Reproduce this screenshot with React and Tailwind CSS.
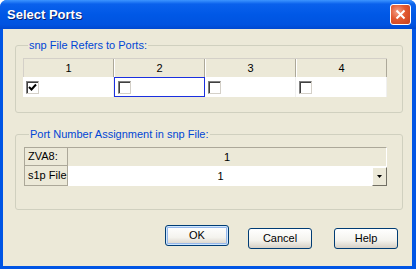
import React from "react";

const font = { fontFamily: '"Liberation Sans", Arial, sans-serif' };

function Checkbox({ checked }) {
  return (
    <div className="w-[13px] h-[13px] bg-white border border-t-[#808080] border-l-[#808080] border-r-[#d4d0c8] border-b-[#d4d0c8] shadow-[inset_1px_1px_0_#404040] flex items-center justify-center">
      {checked && (
        <svg width="9" height="9" viewBox="0 0 9 9">
          <path d="M1 4 L3.5 6.5 L8 1.5" stroke="#000" strokeWidth="2" fill="none" />
        </svg>
      )}
    </div>
  );
}

function XpButton({ children, focused }) {
  return (
    <button
      className={
        "w-[64px] h-[21px] rounded-[3px] border border-[#003c74] text-[11px] text-black bg-[linear-gradient(180deg,#ffffff_0%,#f4f3ee_60%,#d6d0c5_100%)] " +
        (focused ? "shadow-[inset_0_0_0_1px_#cee7ff,inset_0_0_0_2px_#98b8ea]" : "")
      }
    >
      {children}
    </button>
  );
}

function GroupBox({ title, children, className }) {
  return (
    <fieldset className={"border border-[#d0d0bf] rounded-[3px] " + className}>
      <legend className="ml-[5px] px-[1px] text-[11px] leading-[13px] text-[#0046d5]">{title}</legend>
      {children}
    </fieldset>
  );
}

export default function App() {
  const ports = [1, 2, 3, 4];
  return (
    <div
      className="w-[416px] h-[269px] flex flex-col rounded-t-[7px] bg-[#0055e5] overflow-hidden"
      style={font}
    >
      {/* Title bar */}
      <div className="h-[29px] flex items-center justify-between pl-[7px] pr-[5px] bg-[linear-gradient(180deg,#3d95ff_0%,#0a61ec_14%,#0058e6_50%,#0053e0_85%,#0048d0_100%)]">
        <span className="text-white font-bold text-[13px] [text-shadow:1px_1px_0_#0a1e6a]">Select Ports</span>
        <div className="w-[21px] h-[21px] rounded-[3px] border border-white bg-[radial-gradient(circle_at_35%_35%,#f4a18a_0%,#e2582f_45%,#c7401e_100%)] flex items-center justify-center">
          <svg width="11" height="11" viewBox="0 0 11 11">
            <path d="M1.5 1.5 L9.5 9.5 M9.5 1.5 L1.5 9.5" stroke="#fff" strokeWidth="2" />
          </svg>
        </div>
      </div>

      {/* Body */}
      <div className="flex-1 ml-[3px] mr-[4px] mb-[3px] bg-[#ece9d8] pl-[12px] pr-[9px] pt-[10px] flex flex-col">
        <GroupBox title="snp File Refers to Ports:" className="pl-[7px] pr-[15px] pt-[6px] pb-[15px]">
          <div className="flex flex-col w-[364px] text-[11px] text-black">
            <div className="flex h-[19px] bg-[#ece9d8] border-t border-[#d4d0c8]">
              {ports.map((p) => (
                <div
                  key={p}
                  className="w-[91px] flex items-center justify-center border-r border-[#aca899] border-l border-l-white first:border-l-[#d4d0c8]"
                >
                  {p}
                </div>
              ))}
            </div>
            <div className="flex h-[20px] bg-white">
              {ports.map((p) => (
                <div
                  key={p}
                  className={
                    "w-[91px] flex items-center pl-[3px] " +
                    (p === 2 ? "border border-[#1a2fe0]" : "border-r border-[#f0f0f0]")
                  }
                >
                  <Checkbox checked={p === 1} />
                </div>
              ))}
            </div>
          </div>
        </GroupBox>

        <GroupBox title="Port Number Assignment in snp File:" className="mt-[15px] pl-[8px] pr-[15px] pt-[6px] pb-[23px]">
          <div className="flex flex-col w-[363px] text-[11px] text-black">
            <div className="flex h-[19px] bg-[#ece9d8]">
              <div className="w-[44px] flex items-center pl-[3px] border border-[#aca899] border-r-[#aca899]">ZVA8:</div>
              <div className="flex-1 flex items-center justify-center border-t border-r border-[#d4d0c8] border-t-[#aca899] border-r-white">1</div>
            </div>
            <div className="flex h-[20px]">
              <div className="w-[44px] flex items-center pl-[3px] bg-[#ece9d8] border-l border-b border-r border-[#aca899]">s1p File</div>
              <div className="flex-1 flex bg-white">
                <div className="flex-1 flex items-center justify-center pl-[1px]">1</div>
                <div className="w-[15px] h-[19px] mt-[1px] bg-[#ece9d8] border border-t-white border-l-white border-r-[#716f64] border-b-[#716f64] flex items-center justify-center">
                  <svg width="5" height="3" viewBox="0 0 5 3">
                    <path d="M0 0 H5 L2.5 3 Z" fill="#000" />
                  </svg>
                </div>
              </div>
            </div>
          </div>
        </GroupBox>

        <div className="flex justify-end pr-[5px] mt-[15px]">
          <XpButton focused>OK</XpButton>
          <div className="ml-[19px]">
            <XpButton>Cancel</XpButton>
          </div>
          <div className="ml-[22px]">
            <XpButton>Help</XpButton>
          </div>
        </div>
      </div>
    </div>
  );
}
